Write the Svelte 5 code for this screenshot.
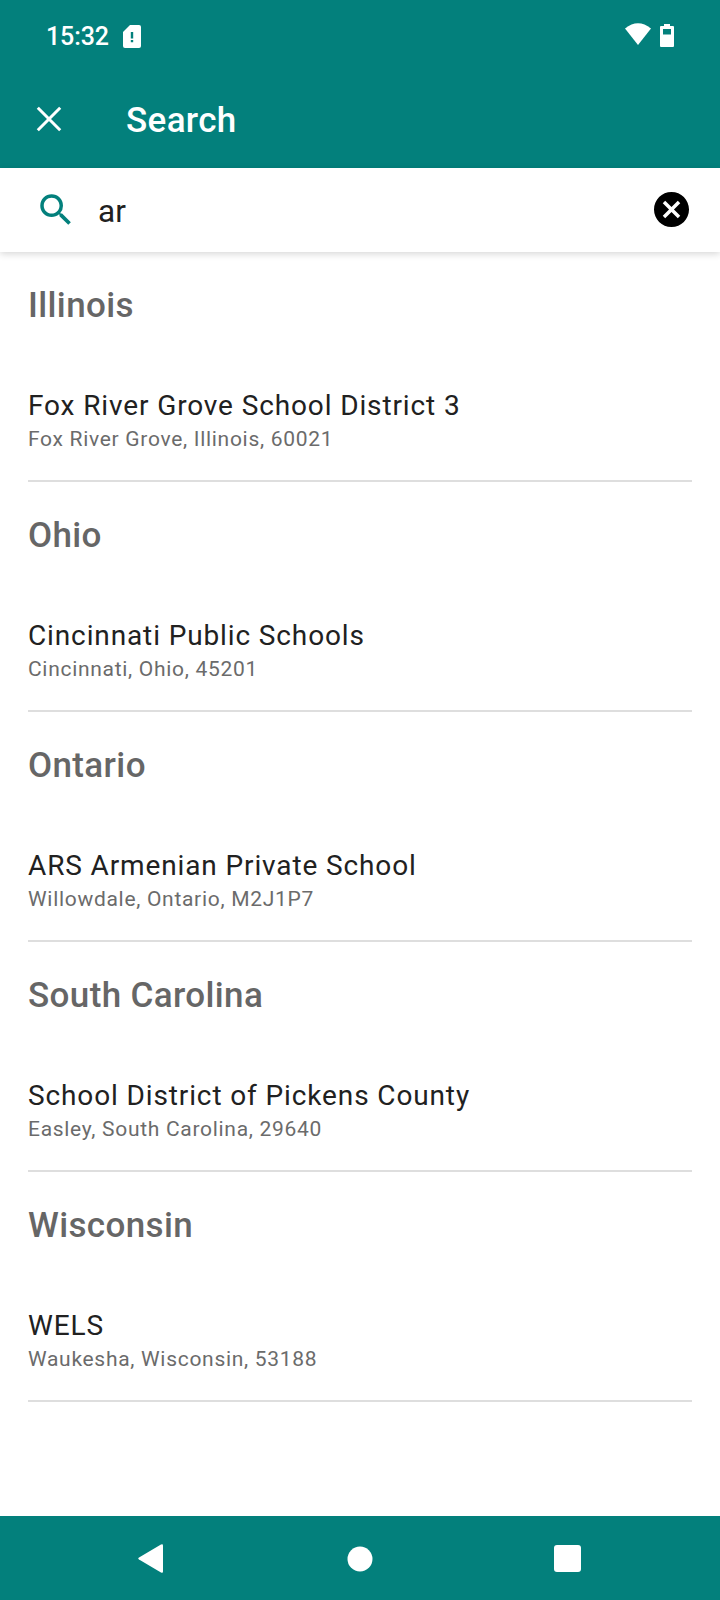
<script lang="ts">
	let query = $state('ar');

	const groups = [
		{ region: 'Illinois', name: 'Fox River Grove School District 3', address: 'Fox River Grove, Illinois, 60021' },
		{ region: 'Ohio', name: 'Cincinnati Public Schools', address: 'Cincinnati, Ohio, 45201' },
		{ region: 'Ontario', name: 'ARS Armenian Private School', address: 'Willowdale, Ontario, M2J1P7' },
		{ region: 'South Carolina', name: 'School District of Pickens County', address: 'Easley, South Carolina, 29640' },
		{ region: 'Wisconsin', name: 'WELS', address: 'Waukesha, Wisconsin, 53188' }
	];

	function clearQuery() {
		query = '';
	}
</script>

<div class="screen">
	<div class="status-bar">
		<span class="time">15:32</span>
		<svg class="sim" width="18" height="23" viewBox="0 0 18 23">
			<path fill="#fff" d="M7 0h9a2 2 0 0 1 2 2v19a2 2 0 0 1-2 2H2a2 2 0 0 1-2-2V7z" />
			<path fill="#03807c" d="M7.800 7h2.400v6.500H7.800zM7.800 15h2.400v2.200H7.800z" />
		</svg>
		<svg class="wifi" width="26" height="22" viewBox="0 0 26 22">
			<path fill="#fff" d="M13 22L0 5.500Q13-5 26 5.500z" />
		</svg>
		<svg class="battery" width="14" height="23" viewBox="0 0 14 23">
			<path fill="#fff" d="M4 0h6v2h3a1 1 0 0 1 1 1v19a1 1 0 0 1-1 1H1a1 1 0 0 1-1-1V3a1 1 0 0 1 1-1h3z" />
			<path fill="#03807c" d="M3 5h8v5.500H3z" />
		</svg>
	</div>

	<header class="app-bar">
		<button class="close" aria-label="Close">
			<svg width="26" height="26" viewBox="0 0 26 26">
				<path stroke="#fff" stroke-width="3" d="M1.800 1.800l22.400 22.400M24.200 1.800L1.800 24.200" />
			</svg>
		</button>
		<h1>Search</h1>
	</header>

	<div class="search-bar">
		<svg class="search-icon" width="42" height="42" viewBox="0 0 24 24">
			<path fill="#03807c" d="M15.500 14h-.79l-.28-.27A6.470 6.470 0 0 0 16 9.500 6.500 6.500 0 1 0 9.500 16c1.610 0 3.090-.59 4.230-1.570l.27.28v.79l5 4.990L20.490 19l-4.990-5zm-6 0C7.010 14 5 11.990 5 9.500S7.010 5 9.500 5 14 7.010 14 9.500 11.990 14 9.500 14z" />
		</svg>
		<input type="text" aria-label="Search" bind:value={query} />
		<button class="clear" aria-label="Clear" onclick={clearQuery}>
			<svg width="35" height="35" viewBox="2 2 20 20">
				<path d="M12 2C6.470 2 2 6.470 2 12s4.470 10 10 10 10-4.470 10-10S17.530 2 12 2zm5 13.590L15.590 17 12 13.410 8.410 17 7 15.590 10.590 12 7 8.410 8.410 7 12 10.590 15.590 7 17 8.410 13.410 12 17 15.590z" />
			</svg>
		</button>
	</div>

	<main>
		{#each groups as group}
			<section>
				<h2>{group.region}</h2>
				<p class="name">{group.name}</p>
				<p class="address">{group.address}</p>
			</section>
		{/each}
	</main>

	<nav>
		<svg width="25" height="29" viewBox="0 0 25 29">
			<path fill="#fff" d="M23 .5q2-1 2 1v26q0 2-2 1L1 15.500q-1.500-1 0-2z" />
		</svg>
		<svg class="home" width="26" height="26" viewBox="0 0 26 26">
			<circle fill="#fff" cx="13" cy="13" r="12.500" />
		</svg>
		<svg width="27" height="27" viewBox="0 0 27 27">
			<rect fill="#fff" width="27" height="27" rx="3" />
		</svg>
	</nav>
</div>

<style>
	:global(body) {
		margin: 0;
	}

	.screen {
		display: flex;
		flex-direction: column;
		width: 720px;
		height: 1600px;
		overflow: hidden;
		background: #fff;
		font-family: Roboto, sans-serif;
	}

	.status-bar {
		display: flex;
		flex: none;
		align-items: center;
		box-sizing: border-box;
		height: 72px;
		padding: 0 46px;
		background: #03807c;
		color: #fff;
	}

	.time {
		width: 64px;
		font-size: 25px;
		font-weight: 500;
		letter-spacing: -0.1px;
	}

	.sim {
		margin-left: 13px;
	}

	.wifi {
		margin: 0 9px 4px auto;
	}

	.battery {
		margin-bottom: 2px;
	}

	button {
		display: flex;
		padding: 0;
		border: none;
		background: none;
	}

	.app-bar {
		display: flex;
		flex: none;
		align-items: center;
		height: 96px;
		padding-left: 36px;
		background: #03807c;
		color: #fff;
	}

	.close {
		margin-bottom: 2px;
	}

	h1 {
		margin: 0 0 0 64px;
		font-size: 35px;
		font-weight: 500;
		letter-spacing: 0.35px;
	}

	.search-bar {
		display: flex;
		flex: none;
		align-items: center;
		box-sizing: border-box;
		height: 84px;
		padding: 0 31.5px 0 35px;
		box-shadow: 0 2px 7px rgba(0, 0, 0, 0.16);
	}

	.clear {
		margin-bottom: 1px;
	}

	input {
		flex: 1;
		min-width: 0;
		margin: 0 20px 0 21px;
		padding: 2px 0 0;
		border: none;
		outline: none;
		font: 31.5px Roboto, sans-serif;
		color: #212121;
	}

	main {
		flex: 1;
		padding: 0 28px;
	}

	section {
		box-sizing: border-box;
		height: 230px;
		padding-top: 32px;
		border-bottom: 2px solid #dedede;
	}

	h2 {
		margin: 0;
		font-size: 35px;
		font-weight: 500;
		line-height: 43px;
		letter-spacing: 0.37px;
		color: #666;
	}

	p {
		margin: 0;
	}

	.name {
		margin-top: 61px;
		font-size: 28px;
		line-height: 36px;
		letter-spacing: 0.875px;
		color: #212121;
	}

	.address {
		font-size: 21px;
		line-height: 30px;
		letter-spacing: 0.7px;
		color: #6b6b6b;
	}

	nav {
		display: flex;
		flex: none;
		align-items: center;
		justify-content: space-between;
		box-sizing: border-box;
		height: 84px;
		padding: 1px 139px 0 138px;
		background: #03807c;
	}

	/* the back and recents icons differ in width, so nudge home to the centre */
	.home {
		margin-left: 3px;
	}
</style>
